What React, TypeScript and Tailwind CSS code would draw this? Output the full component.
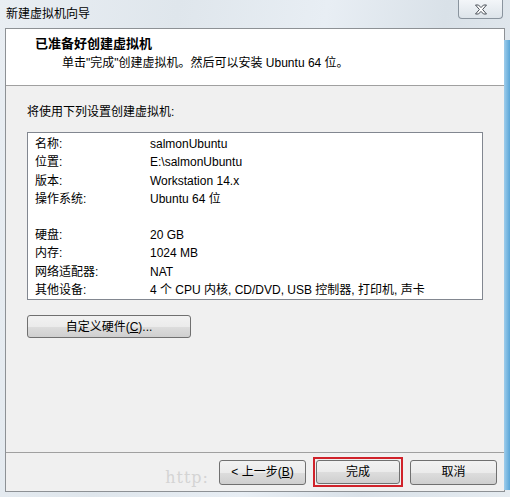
import React from "react";

const font = { fontFamily: '"Liberation Sans", "Noto Sans CJK SC", sans-serif' };

const rows: [string, string][] = [
  ["名称:", "salmonUbuntu"],
  ["位置:", "E:\\salmonUbuntu"],
  ["版本:", "Workstation 14.x"],
  ["操作系统:", "Ubuntu 64 位"],
  ["", ""],
  ["硬盘:", "20 GB"],
  ["内存:", "1024 MB"],
  ["网络适配器:", "NAT"],
  ["其他设备:", "4 个 CPU 内核, CD/DVD, USB 控制器, 打印机, 声卡"],
];

function WinButton({ children, className = "" }: { children: React.ReactNode; className?: string }) {
  return (
    <div
      className={`flex items-center justify-center rounded-[3px] border border-[#707070] bg-[linear-gradient(to_bottom,#f2f2f2_0%,#ebebeb_50%,#dddddd_51%,#cfcfcf_100%)] text-[12px] text-black ${className}`}
    >
      {children}
    </div>
  );
}

export default function App() {
  return (
    <div
      className="relative flex h-[497px] w-[510px] flex-col overflow-hidden bg-[linear-gradient(100deg,#e9eef3_0%,#dfe6ec_30%,#e8eef4_55%,#d9e1e8_75%,#e6ecf1_100%)]"
      style={font}
    >
      {/* title bar */}
      <div className="flex h-[28px] items-start justify-between">
        <span className="pl-[6px] pt-[5px] text-[12px] leading-[18px] text-black">新建虚拟机向导</span>
        <div className="mr-[7px] flex h-[19px] w-[45px] items-center justify-center rounded-b-[4px] border border-t-0 border-[#8a949e] bg-[linear-gradient(to_bottom,#f3f6f9,#dde4ea)]">
          <svg width="14" height="11" viewBox="0 0 14 11">
            <path
              d="M1.5 1 L4.5 1 L7 3.6 L9.5 1 L12.5 1 L8.6 5.5 L12.5 10 L9.5 10 L7 7.4 L4.5 10 L1.5 10 L5.4 5.5 Z"
              fill="#ffffff"
              stroke="#4a5058"
              strokeWidth="1"
              strokeLinejoin="round"
            />
          </svg>
        </div>
      </div>

      {/* client area */}
      <div className="mx-[5px] flex h-[464px] flex-col border border-[#8d9195] bg-[#f0f0f0]">
        <div className="flex h-[57px] flex-col border-b border-[#a0a0a0] bg-white">
          <div className="pl-[29px] pt-[6px] text-[13px] font-bold leading-[18px] text-black">已准备好创建虚拟机</div>
          <div className="pl-[56px] pt-[1px] text-[12px] leading-[18px] text-black">
            单击"完成"创建虚拟机。然后可以安装 Ubuntu 64 位。
          </div>
        </div>

        <div className="flex flex-1 flex-col px-[21px]">
          <div className="pt-[17px] text-[12px] leading-[18px] text-black">将使用下列设置创建虚拟机:</div>
          <div className="mt-[11px] flex h-[168px] flex-col border border-[#828790] bg-white pl-[7px] pt-[2px]">
            {rows.map(([k, v], i) => (
              <div key={i} className="flex h-[18.3px] items-center text-[12px] text-black">
                <span className="w-[115px] shrink-0">{k}</span>
                <span>{v}</span>
              </div>
            ))}
          </div>
          <WinButton className="mt-[15px] h-[23px] w-[164px]">自定义硬件(<span className="underline">C</span>)...</WinButton>
        </div>

        <div className="flex h-[39px] items-center justify-end gap-[7px] border-t border-[#a0a0a0] pr-[7px]">
          <span
            className="pointer-events-none mr-[3px] mt-[12px] text-[16px] leading-[18px] tracking-[1px] text-[#d4d4d4]"
            style={{ fontFamily: '"DejaVu Serif", serif' }}
          >
            http:
          </span>
          <WinButton className="h-[25px] w-[87px]">&lt; 上一步(<span className="underline">B</span>)</WinButton>
          <div className="flex h-[30px] w-[90px] items-center justify-center border-2 border-[#d0222a]">
            <WinButton className="h-[24px] w-[84px] border-[#3c7fb1]">完成</WinButton>
          </div>
          <WinButton className="h-[25px] w-[87px]">取消</WinButton>
        </div>
      </div>

      <div className="pointer-events-none absolute right-0 top-[40px] h-[450px] w-[6px] bg-[linear-gradient(to_right,#9fcdeb,#5aa6d8)]" />
    </div>
  );
}
